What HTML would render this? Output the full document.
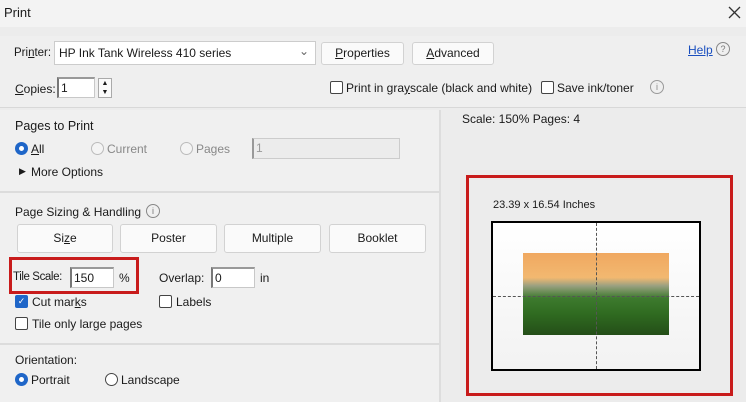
<!DOCTYPE html>
<html><head><style>
*{box-sizing:border-box;margin:0;padding:0}
body{width:746px;height:402px;background:#ececec;font-family:"Liberation Sans",sans-serif;font-size:12px;color:#1a1a1a;position:relative;overflow:hidden}
.a{position:absolute;white-space:nowrap}
.btn{position:absolute;background:#fafafa;border:1px solid #d2d2d2;border-radius:3px;text-align:center}
.inp{position:absolute;background:#fff;border:1px solid #c8c8c8;border-left:2px solid #777;border-top:2px solid #999}
.cb{position:absolute;width:13px;height:13px;border:1px solid #444;border-radius:2px;background:#fff}
.rd{position:absolute;width:13px;height:13px;border-radius:50%;border:1px solid #bbb;background:#f4f4f4}
.rd.on{border:4px solid #1f66c8;background:#fff}
.sep{position:absolute;height:2px;background:#dcdcdc}
</style></head><body>
<div class="a" style="left:0;top:0;width:746px;height:27px;background:#f3f3f3"></div>
<div class="a" style="left:4px;top:5px;font-size:13px">Print</div>
<svg class="a" style="left:728px;top:6px" width="13" height="13"><path d="M1 1L12 12M12 1L1 12" stroke="#333" stroke-width="1.3"/></svg>
<div class="a" style="left:0;top:36px;width:746px;height:72px;background:#efefef;border-bottom:1px solid #d8d8d8"></div>
<div class="a" style="left:14px;top:47px;font-size:11.5px">Pri<u>n</u>ter:</div>
<div class="inp" style="left:54px;top:41px;width:262px;height:24px;border:1px solid #ccc;padding:4px 4px">HP Ink Tank Wireless 410 series<span style="position:absolute;right:6px;top:2px;color:#666">⌄</span></div>
<div class="btn" style="left:321px;top:42px;width:83px;height:23px;line-height:21px"><u>P</u>roperties</div>
<div class="btn" style="left:412px;top:42px;width:82px;height:23px;line-height:21px"><u>A</u>dvanced</div>
<div class="a" style="left:688px;top:43px;color:#1a4fbf;text-decoration:underline">Help</div>
<div class="a" style="left:716px;top:42px;width:14px;height:14px;border:1px solid #888;border-radius:50%;font-size:9px;text-align:center;line-height:12px;color:#777">?</div>
<div class="a" style="left:15px;top:82px"><u>C</u>opies:</div>
<div class="inp" style="left:57px;top:77px;width:38px;height:21px;padding:2px">1</div>
<div class="a" style="left:98px;top:78px;width:14px;height:20px;border:1px solid #aaa;background:#fafafa;font-size:7px;text-align:center;line-height:9px">▲<br>▼</div>
<div class="cb" style="left:330px;top:81px"></div>
<div class="a" style="left:346px;top:81px">Print in gra<u>y</u>scale (black and white)</div>
<div class="cb" style="left:541px;top:81px"></div>
<div class="a" style="left:557px;top:81px">Save ink/toner</div>
<div class="a" style="left:650px;top:80px;width:14px;height:14px;border:1px solid #999;border-radius:50%;font-size:9px;text-align:center;line-height:12px;color:#888">i</div>
<div class="a" style="left:0;top:110px;width:441px;height:292px;background:#f0f0f0;border-right:2px solid #ddd"></div>
<div class="a" style="left:15px;top:119px;font-size:12.5px">Pages to Print</div>
<div class="rd on" style="left:15px;top:142px"></div><div class="a" style="left:31px;top:142px"><u>A</u>ll</div>
<div class="rd" style="left:91px;top:142px"></div><div class="a" style="left:107px;top:142px;color:#888">Current</div>
<div class="rd" style="left:180px;top:142px"></div><div class="a" style="left:196px;top:142px;color:#888">Pages</div>
<div class="a" style="left:252px;top:138px;width:148px;height:21px;background:#ececec;border:1px solid #ccc;border-left:2px solid #999;color:#999;padding:2px">1</div>
<div class="a" style="left:19px;top:166px;font-size:9px">▶</div><div class="a" style="left:31px;top:165px">More Options</div>
<div class="sep" style="left:0;top:191px;width:440px"></div>
<div class="a" style="left:15px;top:205px;font-size:12px">Page Sizing &amp; Handling</div>
<div class="a" style="left:146px;top:204px;width:14px;height:14px;border:1px solid #888;border-radius:50%;font-size:9px;text-align:center;line-height:12px;color:#777">i</div>
<div class="btn" style="left:17px;top:224px;width:96px;height:29px;line-height:27px;font-size:12px">Si<u>z</u>e</div>
<div class="btn" style="left:120px;top:224px;width:97px;height:29px;line-height:27px;font-size:12px">Poster</div>
<div class="btn" style="left:224px;top:224px;width:97px;height:29px;line-height:27px;font-size:12px">Multiple</div>
<div class="btn" style="left:329px;top:224px;width:97px;height:29px;line-height:27px;font-size:12px">Booklet</div>
<div class="a" style="left:9px;top:257px;width:130px;height:37px;border:3px solid #c81b1b"></div>
<div class="a" style="left:13px;top:271px;font-size:11.5px;letter-spacing:-0.4px">Tile Scale:</div>
<div class="inp" style="left:70px;top:267px;width:44px;height:21px;padding:2px">150</div>
<div class="a" style="left:119px;top:271px">%</div>
<div class="a" style="left:159px;top:271px">Overlap:</div>
<div class="inp" style="left:211px;top:267px;width:44px;height:21px;padding:2px">0</div>
<div class="a" style="left:260px;top:271px">in</div>
<div class="a" style="left:15px;top:295px;width:13px;height:13px;background:#1f66c8;border-radius:2px;color:#fff;font-size:9px;text-align:center;line-height:13px">✓</div>
<div class="a" style="left:32px;top:295px">Cut mar<u>k</u>s</div>
<div class="cb" style="left:159px;top:295px"></div><div class="a" style="left:176px;top:295px">Labels</div>
<div class="cb" style="left:15px;top:317px"></div><div class="a" style="left:32px;top:317px">Tile only large pages</div>
<div class="sep" style="left:0;top:343px;width:440px"></div>
<div class="a" style="left:15px;top:353px">Orientation:</div>
<div class="rd on" style="left:15px;top:373px"></div><div class="a" style="left:31px;top:373px">Portrait</div>
<div class="rd" style="left:105px;top:373px;background:#fff;border-color:#444"></div><div class="a" style="left:121px;top:373px">Landscape</div>
<div class="a" style="left:462px;top:112px">Scale: 150% Pages: 4</div>
<div class="a" style="left:466px;top:175px;width:267px;height:221px;border:3px solid #c81b1b"></div>
<div class="a" style="left:493px;top:199px;font-size:11px">23.39 x 16.54 Inches</div>
<div class="a" style="left:491px;top:221px;width:210px;height:150px;border:2px solid #000;background:linear-gradient(#fff,#f2f2f2)"></div>
<div class="a" style="left:523px;top:253px;width:146px;height:82px;background:linear-gradient(#f0a860 0%,#f2b870 30%,#9aa080 40%,#3d7a2e 55%,#2f6a20 75%,#244e18 100%)"></div>
<div class="a" style="left:596px;top:223px;height:146px;border-left:1px dashed #555"></div>
<div class="a" style="left:493px;top:296px;width:206px;border-top:1px dashed #555"></div>
</body></html>
